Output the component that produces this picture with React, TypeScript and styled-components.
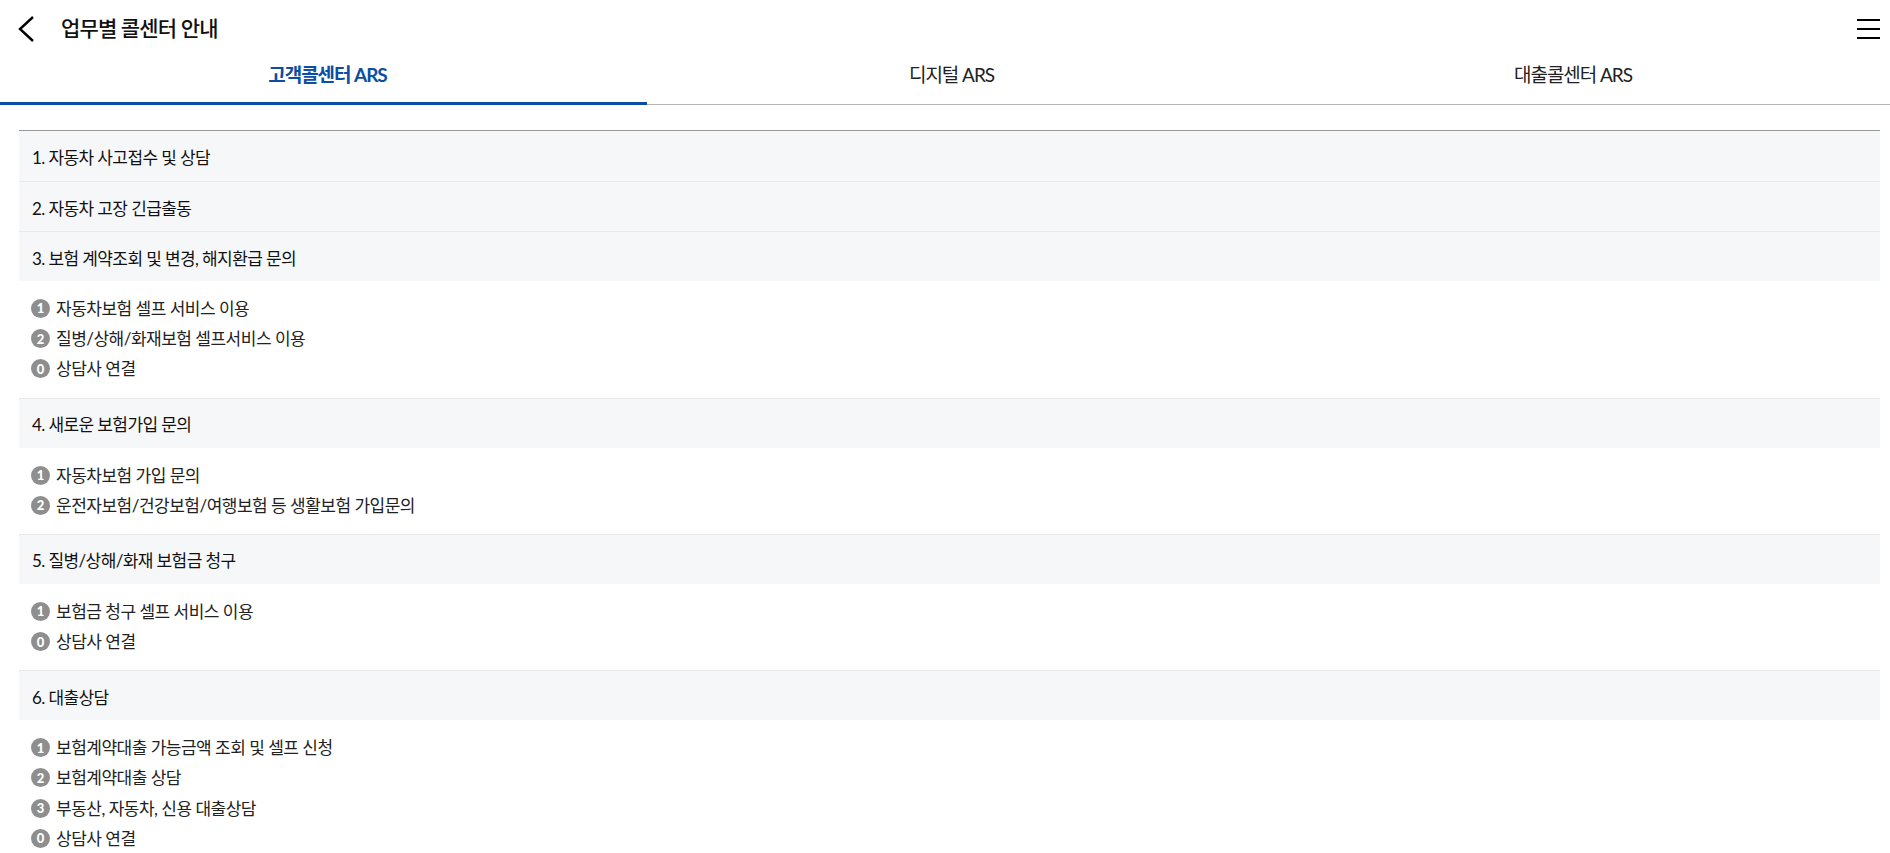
import React from "react";
import styled, { createGlobalStyle } from "styled-components";

const Global = createGlobalStyle`
  html, body { margin: 0; padding: 0; background: #fff; height: 853px; overflow: hidden; }
  body { font-family: Lato, "Noto Sans CJK KR", sans-serif; color: #222; }
  * { box-sizing: border-box; }
`;

const Page = styled.div`
  width: 1890px;
  height: 853px;
  overflow: hidden;
`;
const Header = styled.header`
  height: 58px;
  display: flex;
  align-items: center;
  padding: 0 10px 4px 17px;
`;
const BackBtn = styled.button`
  width: 44px;
  height: 26px;
  margin-top: 4px;
  padding: 0;
  border: 0;
  background: none;
  display: flex;
  align-items: center;
`;
const Title = styled.h1`
  flex: 1;
  margin: 0;
  font-size: 21px;
  font-weight: 500;
  letter-spacing: -0.85px;
  color: #111;
`;
const MenuBtn = styled.button`
  width: 23px;
  height: 20px;
  margin-top: 4px;
  padding: 0;
  border: 0;
  background: none;
  display: flex;
  flex-direction: column;
  justify-content: space-between;
  & > span { display: block; height: 2px; background: #000; }
`;
const Tabs = styled.nav`
  display: flex;
  height: 47px;
  border-bottom: 1px solid #b4b4b4;
`;
const Tab = styled.a<{ $active?: boolean; $w: number }>`
  flex: 0 0 ${(p) => p.$w}px;
  display: flex;
  align-items: center;
  justify-content: center;
  height: ${(p) => (p.$active ? "47px" : "46px")};
  padding-bottom: ${(p) => (p.$active ? "13px" : "16px")};
  padding-left: ${(p) => (p.$active ? "8px" : "0")};
  font-size: 19px;
  letter-spacing: -1.05px;
  font-weight: ${(p) => (p.$active ? 700 : 400)};
  color: ${(p) => (p.$active ? "#0b4ea2" : "#222")};
  border-bottom: ${(p) => (p.$active ? "3px solid #0b4ea2" : "0")};
`;
const Content = styled.main`
  margin: 25px 10px 0 19px;
  border-top: 1px solid #999;
`;
const SectionHead = styled.h2`
  margin: 0;
  height: 50px;
  padding: 1px 13px 0;
  display: flex;
  align-items: center;
  background: #f6f7f9;
  border-top: 1px solid #e9e9e9;
  font-size: 17px;
  font-weight: 400;
  letter-spacing: -0.6px;
  color: #111;
  &:first-child { border-top: 0; }
`;
const Items = styled.ul`
  list-style: none;
  margin: 0;
  padding: 12.4px 12px 13.6px;
`;
const Item = styled.li`
  height: 30.2px;
  display: flex;
  align-items: center;
  font-size: 17px;
  letter-spacing: -0.5px;
  color: #222;
`;
const Num = styled.span`
  flex: none;
  width: 19px;
  height: 19px;
  margin-right: 6px;
  border-radius: 50%;
  background: #8e8e8e;
  color: #fff;
  font-size: 13px;
  font-weight: 900;
  letter-spacing: 0;
  display: flex;
  align-items: center;
  justify-content: center;
`;
const Label = styled.span`
  padding-bottom: 2px;
`;

const sections: { title: string; items?: [string, string][] }[] = [
  { title: "1. 자동차 사고접수 및 상담" },
  { title: "2. 자동차 고장 긴급출동" },
  {
    title: "3. 보험 계약조회 및 변경, 해지환급 문의",
    items: [
      ["1", "자동차보험 셀프 서비스 이용"],
      ["2", "질병/상해/화재보험 셀프서비스 이용"],
      ["0", "상담사 연결"],
    ],
  },
  {
    title: "4. 새로운 보험가입 문의",
    items: [
      ["1", "자동차보험 가입 문의"],
      ["2", "운전자보험/건강보험/여행보험 등 생활보험 가입문의"],
    ],
  },
  {
    title: "5. 질병/상해/화재 보험금 청구",
    items: [
      ["1", "보험금 청구 셀프 서비스 이용"],
      ["0", "상담사 연결"],
    ],
  },
  {
    title: "6. 대출상담",
    items: [
      ["1", "보험계약대출 가능금액 조회 및 셀프 신청"],
      ["2", "보험계약대출 상담"],
      ["3", "부동산, 자동차, 신용 대출상담"],
      ["0", "상담사 연결"],
    ],
  },
];

export default function App() {
  return (
    <Page>
      <Global />
      <Header>
        <BackBtn aria-label="뒤로">
          <svg width="20" height="26" viewBox="0 0 20 26" fill="none">
            <path d="M16 1 L3 13 L16 25" stroke="#000" strokeWidth="2.4" />
          </svg>
        </BackBtn>
        <Title>업무별 콜센터 안내</Title>
        <MenuBtn aria-label="메뉴">
          <span />
          <span />
          <span />
        </MenuBtn>
      </Header>
      <Tabs>
        <Tab $active $w={647}>고객콜센터 ARS</Tab>
        <Tab $w={609}>디지털 ARS</Tab>
        <Tab $w={634}>대출콜센터 ARS</Tab>
      </Tabs>
      <Content>
        {sections.map((s) => (
          <React.Fragment key={s.title}>
            <SectionHead>{s.title}</SectionHead>
            {s.items && (
              <Items>
                {s.items.map(([n, t]) => (
                  <Item key={t}>
                    <Num>{n}</Num>
                    <Label>{t}</Label>
                  </Item>
                ))}
              </Items>
            )}
          </React.Fragment>
        ))}
      </Content>
    </Page>
  );
}
